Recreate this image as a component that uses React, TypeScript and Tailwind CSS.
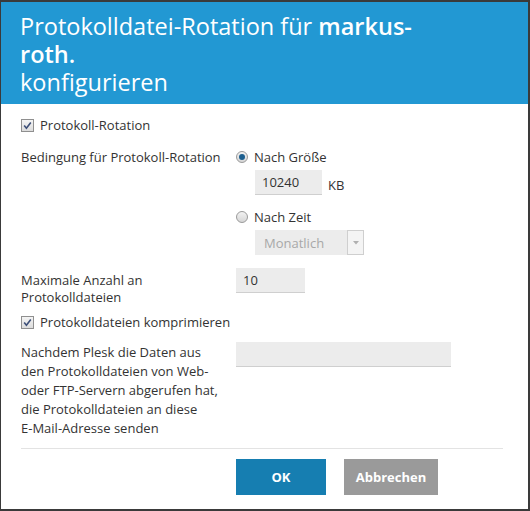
import React from "react";

const font = { fontFamily: '"Open Sans", "Noto Sans", sans-serif' };

function Checkbox() {
  return (
    <span className="inline-flex h-[13px] w-[13px] shrink-0 items-center justify-center border border-[#8f8f8f] bg-gradient-to-b from-[#f4f4f4] to-[#dcdcdc]">
      <svg width="9" height="9" viewBox="0 0 9 9">
        <path d="M1.2 4.6 L3.4 7.2 L7.8 1.4" fill="none" stroke="#3d4f78" strokeWidth="1.6" />
      </svg>
    </span>
  );
}

function Radio({ checked }: { checked: boolean }) {
  return (
    <span className="inline-flex h-[12px] w-[12px] shrink-0 items-center justify-center rounded-full border border-[#9a9a9a] bg-gradient-to-b from-[#f2f2f2] to-[#d6d6d6]">
      {checked && <span className="h-[6px] w-[6px] rounded-full bg-[#1d5f8f]" />}
    </span>
  );
}

export default function App() {
  return (
    <div
      className="flex h-[511px] w-[530px] flex-col border-t-2 border-r-2 border-b-2 border-l border-[#3a3a3a] bg-white text-[13px] leading-[18px] text-[#333]"
      style={font}
    >
      <div className="h-[102px] shrink-0 bg-[#2298d3] pl-[19px] pt-[10px] text-[23.5px] leading-[28px] text-white">
        Protokolldatei-Rotation für <b className="font-semibold">markus-</b>
        <br />
        <b className="font-semibold">roth.</b>
        <br />
        konfigurieren
      </div>

      <div className="flex flex-1 flex-col px-[20px] pt-[12px]">
        <label className="flex items-center gap-[6px]">
          <Checkbox />
          <span>Protokoll-Rotation</span>
        </label>

        <div className="mt-[14px] grid grid-cols-[215px_1fr]">
          <div>Bedingung für Protokoll-Rotation</div>
          <div className="flex flex-col">
            <label className="flex items-center gap-[6px]">
              <Radio checked />
              <span>Nach Größe</span>
            </label>
            <div className="mt-[4px] flex items-end gap-[6px] pl-[19px]">
              <div className="flex h-[25px] w-[67px] items-center border-b border-[#cfcfcf] bg-[#ececec] px-[7px]">10240</div>
              <span className="pb-[1px]">KB</span>
            </div>
            <label className="mt-[13px] flex items-center gap-[6px]">
              <Radio checked={false} />
              <span>Nach Zeit</span>
            </label>
            <div className="mt-[4px] pl-[19px]">
              <div className="flex h-[25px] w-[109px] items-center bg-[#ececec]">
                <span className="flex-1 pl-[9px] text-[#a8a8a8]">Monatlich</span>
                <span className="flex h-[25px] w-[17px] items-center justify-center border border-[#cfcfcf] bg-[#f4f4f4]">
                  <svg width="6" height="4" viewBox="0 0 6 4">
                    <path d="M0 0 H6 L3 3.5 Z" fill="#b0b0b0" />
                  </svg>
                </span>
              </div>
            </div>
          </div>
        </div>

        <div className="mt-[13px] grid grid-cols-[215px_1fr]">
          <div className="pt-[4px] leading-[17px]">
            Maximale Anzahl an
            <br />
            Protokolldateien
          </div>
          <div>
            <div className="flex h-[25px] w-[69px] items-center border-b border-[#cfcfcf] bg-[#ececec] px-[7px]">10</div>
          </div>
        </div>

        <label className="mt-[7px] flex items-center gap-[6px]">
          <Checkbox />
          <span>Protokolldateien komprimieren</span>
        </label>

        <div className="mt-[11px] grid grid-cols-[215px_1fr]">
          <div className="pt-[1px] leading-[19px]">
            Nachdem Plesk die Daten aus
            <br />
            den Protokolldateien von Web-
            <br />
            oder FTP-Servern abgerufen hat,
            <br />
            die Protokolldateien an diese
            <br />
            E-Mail-Adresse senden
          </div>
          <div>
            <div className="h-[25px] w-[215px] border-b border-[#cfcfcf] bg-[#ececec]" />
          </div>
        </div>

        <div className="mt-[10px] h-px w-[482px] bg-[#e3e3e3]" />

        <div className="mt-[10px] flex gap-[18px] pl-[215px]">
          <button className="h-[36px] w-[90px] bg-[#167eb1] text-[13px] font-bold text-white">OK</button>
          <button className="h-[36px] w-[94px] bg-[#9a9a9a] text-[13px] font-bold text-white">Abbrechen</button>
        </div>
      </div>
    </div>
  );
}
